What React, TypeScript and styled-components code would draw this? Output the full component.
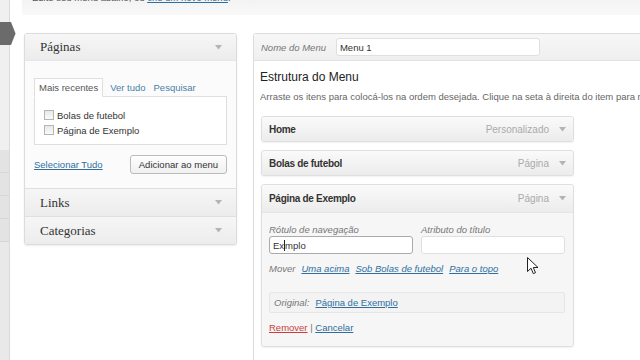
import React from "react";
import styled, { createGlobalStyle } from "styled-components";

const GlobalStyle = createGlobalStyle`
  *, *::before, *::after { box-sizing: border-box; }
  html, body { margin: 0; padding: 0; background: #fff; }
  body {
    font-family: "Liberation Sans", Arial, sans-serif;
    font-size: 9.5px;
    color: #333;
  }
`;

const Page = styled.div`
  position: relative;
  display: flex;
  width: 640px;
  height: 360px;
  overflow: hidden;
  background: #fff;
`;

/* admin sidebar edge */
const AdminMenu = styled.div`
  position: relative;
  width: 10px;
  flex-shrink: 0;
  display: flex;
  flex-direction: column;
  border-right: 1px solid #dadada;
`;

const MenuTop = styled.div`
  height: 150px;
  background: #f0f0f0;
`;

const MenuBand = styled.div`
  height: 23px;
  background: #e3e3e3;
  border-bottom: 1px solid #d6d6d6;
`;

const MenuRest = styled.div`
  flex: 1;
  background: #e9e9e9;
`;

const CurrentArrow = styled.svg`
  position: absolute;
  left: 0;
  top: 22px;
`;

const Main = styled.div`
  flex: 1;
  min-width: 0;
  display: flex;
  flex-direction: column;
`;

const Notice = styled.div`
  height: 15px;
  margin-left: 12px;
  padding-left: 10px;
  overflow: hidden;
  background: linear-gradient(#f3f3f3, #f9f9f9);
  white-space: nowrap;
`;

const NoticeText = styled.div`
  margin-top: -8px;
  line-height: 12px;
  color: #555;
`;

const Link = styled.a<{ $italic?: boolean }>`
  color: #2f6f9f;
  text-decoration: underline;
  font-style: ${(p) => (p.$italic ? "italic" : "normal")};
  cursor: pointer;
`;

const Columns = styled.div`
  flex: 1;
  display: flex;
  gap: 16px;
  padding: 18px 0 0 14px;
`;

/* left column */
const SidePanel = styled.div`
  align-self: flex-start;
  width: 213px;
  flex-shrink: 0;
  border: 1px solid #dcdcdc;
  border-radius: 3px;
  box-shadow: 0 1px 2px rgba(0, 0, 0, 0.08);
  background: #fcfcfc;
  overflow: hidden;
`;

const SectionHead = styled.div<{ $first?: boolean }>`
  height: ${(p) => (p.$first ? 26 : 28)}px;
  display: flex;
  align-items: center;
  justify-content: space-between;
  padding: 0 14px 0 15px;
  background: linear-gradient(#f6f6f6, #ececec);
  border-top: ${(p) => (p.$first ? "none" : "1px solid #dfdfdf")};
  font-family: "Liberation Serif", Georgia, serif;
  font-size: 13px;
  color: #333;
`;

const Arrow = () => (
  <svg width="7" height="5" viewBox="0 0 7 5">
    <path d="M0 0H7L3.5 4.5Z" fill="#b4b4b4" />
  </svg>
);

const SectionBody = styled.div`
  padding: 17px 9px 14px 9px;
  border-top: 1px solid #e6e6e6;
  background: #fbfbfb;
`;

const Tabs = styled.div`
  display: flex;
  align-items: flex-end;
  gap: 6px;
`;

const Tab = styled.div<{ $active?: boolean }>`
  height: 19px;
  display: flex;
  align-items: center;
  padding: 0 ${(p) => (p.$active ? 4 : 0)}px;
  margin-bottom: -1px;
  border: 1px solid ${(p) => (p.$active ? "#dfdfdf" : "transparent")};
  border-bottom-color: ${(p) => (p.$active ? "#fff" : "transparent")};
  background: ${(p) => (p.$active ? "#fff" : "transparent")};
  color: ${(p) => (p.$active ? "#555" : "#4a7fa8")};
`;

const TabPanel = styled.div`
  height: 49px;
  padding: 12px 9px 0;
  border: 1px solid #dfdfdf;
  background: #fff;
  display: flex;
  flex-direction: column;
  gap: 3px;
`;

const CheckRow = styled.label`
  display: flex;
  align-items: center;
  gap: 3px;
  height: 12px;
  color: #333;
`;

const Check = styled.span`
  width: 10px;
  height: 10px;
  border: 1px solid #b5b5b5;
  background: linear-gradient(#e8e8e8, #fafafa);
`;

const ActionRow = styled.div`
  display: flex;
  align-items: center;
  justify-content: space-between;
  margin-top: 10px;
`;

const Button = styled.button`
  height: 19px;
  padding: 0 8px;
  border: 1px solid #bbb;
  border-radius: 3px;
  background: linear-gradient(#fefefe, #f0f0f0);
  font-family: "Liberation Sans", Arial, sans-serif;
  font-size: 9.5px;
  color: #333;
`;

/* right column */
const MenuPanel = styled.div`
  width: 420px;
  flex-shrink: 0;
  border-top: 1px solid #dcdcdc;
  border-left: 1px solid #dcdcdc;
  border-top-left-radius: 3px;
  background: #fff;
`;

const MenuHeader = styled.div`
  height: 27px;
  display: flex;
  align-items: center;
  gap: 10px;
  padding: 0 7px;
  background: linear-gradient(#f7f7f7, #efefef);
  border-bottom: 1px solid #e2e2e2;
`;

const MutedLabel = styled.span`
  font-style: italic;
  color: #777;
`;

const TextBox = styled.div<{ $w: number; $focus?: boolean }>`
  width: ${(p) => p.$w}px;
  height: 18px;
  display: flex;
  align-items: center;
  padding: 0 3px;
  background: #fff;
  border: 1px solid ${(p) => (p.$focus ? "#aaa" : "#dfdfdf")};
  border-radius: 3px;
  color: #333;
`;

const Caret = styled.span`
  display: inline-block;
  width: 1px;
  height: 11px;
  background: #222;
`;

const MenuBody = styled.div`
  padding: 9px 0 0 6px;
`;

const Title = styled.h3`
  margin: 0;
  font-size: 12px;
  line-height: 14px;
  font-weight: normal;
  color: #222;
`;

const Description = styled.p`
  margin: 7px 0 0;
  line-height: 12px;
  color: #666;
  white-space: nowrap;
`;

const ItemList = styled.div`
  margin: 13px 0 0 1px;
  width: 313px;
  display: flex;
  flex-direction: column;
  gap: 8px;
`;

const Item = styled.div`
  border: 1px solid #dfdfdf;
  border-radius: 3px;
  box-shadow: 0 1px 2px rgba(0, 0, 0, 0.06);
  background: #f5f5f5;
  overflow: hidden;
`;

const ItemHead = styled.div<{ $tall?: boolean }>`
  height: ${(p) => (p.$tall ? 27 : 24)}px;
  display: flex;
  align-items: center;
  justify-content: space-between;
  padding: 0 7px;
  background: linear-gradient(#fafafa, #ececec);
`;

const ItemTitle = styled.span`
  font-size: 10px;
  font-weight: bold;
  letter-spacing: -0.3px;
  color: #333;
`;

const ItemMeta = styled.span`
  display: flex;
  align-items: center;
  gap: 10px;
  font-size: 10px;
  color: #aaa;
`;

const ItemBody = styled.div`
  padding: 11px 8px 12px 7px;
  border-top: 1px solid #e6e6e6;
  background: #f6f6f6;
`;

const FieldRow = styled.div`
  display: flex;
  gap: 8px;
`;

const Field = styled.div`
  display: flex;
  flex-direction: column;
  gap: 1px;
`;

const MoveRow = styled.div`
  display: flex;
  gap: 6px;
  margin-top: 9px;
  line-height: 12px;
`;

const OriginalBox = styled.div`
  height: 21px;
  margin-top: 17px;
  display: flex;
  align-items: center;
  gap: 6px;
  padding: 0 4px;
  border: 1px solid #e6e6e6;
  border-radius: 2px;
  background: #f3f3f3;
`;

const Actions = styled.div`
  margin-top: 9px;
  line-height: 12px;
  color: #777;
`;

const DangerLink = styled(Link)`
  color: #cc3c3c;
`;

const Pointer = styled.svg`
  position: absolute;
  left: 527px;
  top: 257px;
`;

export default function App() {
  return (
    <>
      <GlobalStyle />
      <Page>
        <AdminMenu>
          <MenuTop />
          <MenuBand />
          <MenuBand />
          <MenuBand />
          <MenuBand />
          <MenuRest />
          <CurrentArrow width="16" height="23" viewBox="0 0 16 23">
            <path d="M0 0H11L15.5 11.5L11 23H0Z" fill="#6b6b6b" />
          </CurrentArrow>
        </AdminMenu>
        <Main>
          <Notice>
            <NoticeText>
              Edite seu menu abaixo, ou <Link>crie um novo menu</Link>.
            </NoticeText>
          </Notice>
          <Columns>
            <SidePanel>
              <SectionHead $first>
                Páginas
                <Arrow />
              </SectionHead>
              <SectionBody>
                <Tabs>
                  <Tab $active>Mais recentes</Tab>
                  <Tab>Ver tudo</Tab>
                  <Tab>Pesquisar</Tab>
                </Tabs>
                <TabPanel>
                  <CheckRow>
                    <Check />
                    Bolas de futebol
                  </CheckRow>
                  <CheckRow>
                    <Check />
                    Página de Exemplo
                  </CheckRow>
                </TabPanel>
                <ActionRow>
                  <Link>Selecionar Tudo</Link>
                  <Button>Adicionar ao menu</Button>
                </ActionRow>
              </SectionBody>
              <SectionHead>
                Links
                <Arrow />
              </SectionHead>
              <SectionHead>
                Categorias
                <Arrow />
              </SectionHead>
            </SidePanel>

            <MenuPanel>
              <MenuHeader>
                <MutedLabel>Nome do Menu</MutedLabel>
                <TextBox $w={204}>Menu 1</TextBox>
              </MenuHeader>
              <MenuBody>
                <Title>Estrutura do Menu</Title>
                <Description>
                  Arraste os itens para colocá-los na ordem desejada. Clique na seta à direita do item para mais
                  opções de configuração.
                </Description>
                <ItemList>
                  <Item>
                    <ItemHead>
                      <ItemTitle>Home</ItemTitle>
                      <ItemMeta>
                        Personalizado
                        <Arrow />
                      </ItemMeta>
                    </ItemHead>
                  </Item>
                  <Item>
                    <ItemHead>
                      <ItemTitle>Bolas de futebol</ItemTitle>
                      <ItemMeta>
                        Página
                        <Arrow />
                      </ItemMeta>
                    </ItemHead>
                  </Item>
                  <Item>
                    <ItemHead $tall>
                      <ItemTitle>Página de Exemplo</ItemTitle>
                      <ItemMeta>
                        Página
                        <Arrow />
                      </ItemMeta>
                    </ItemHead>
                    <ItemBody>
                      <FieldRow>
                        <Field>
                          <MutedLabel>Rótulo de navegação</MutedLabel>
                          <TextBox $w={144} $focus>
                            Ex<Caret />mplo
                          </TextBox>
                        </Field>
                        <Field>
                          <MutedLabel>Atributo do título</MutedLabel>
                          <TextBox $w={144} />
                        </Field>
                      </FieldRow>
                      <MoveRow>
                        <MutedLabel>Mover</MutedLabel>
                        <Link $italic>Uma acima</Link>
                        <Link $italic>Sob Bolas de futebol</Link>
                        <Link $italic>Para o topo</Link>
                      </MoveRow>
                      <OriginalBox>
                        <MutedLabel>Original:</MutedLabel>
                        <Link>Página de Exemplo</Link>
                      </OriginalBox>
                      <Actions>
                        <DangerLink>Remover</DangerLink> | <Link>Cancelar</Link>
                      </Actions>
                    </ItemBody>
                  </Item>
                </ItemList>
              </MenuBody>
            </MenuPanel>
          </Columns>
        </Main>
        <Pointer width="12" height="18" viewBox="0 0 12 18">
          <path d="M0.5 0.5V14.5L4 11.2L6.3 16.6L8.5 15.7L6.3 10.5H11Z" fill="#fff" stroke="#222" strokeWidth="1" />
        </Pointer>
      </Page>
    </>
  );
}
